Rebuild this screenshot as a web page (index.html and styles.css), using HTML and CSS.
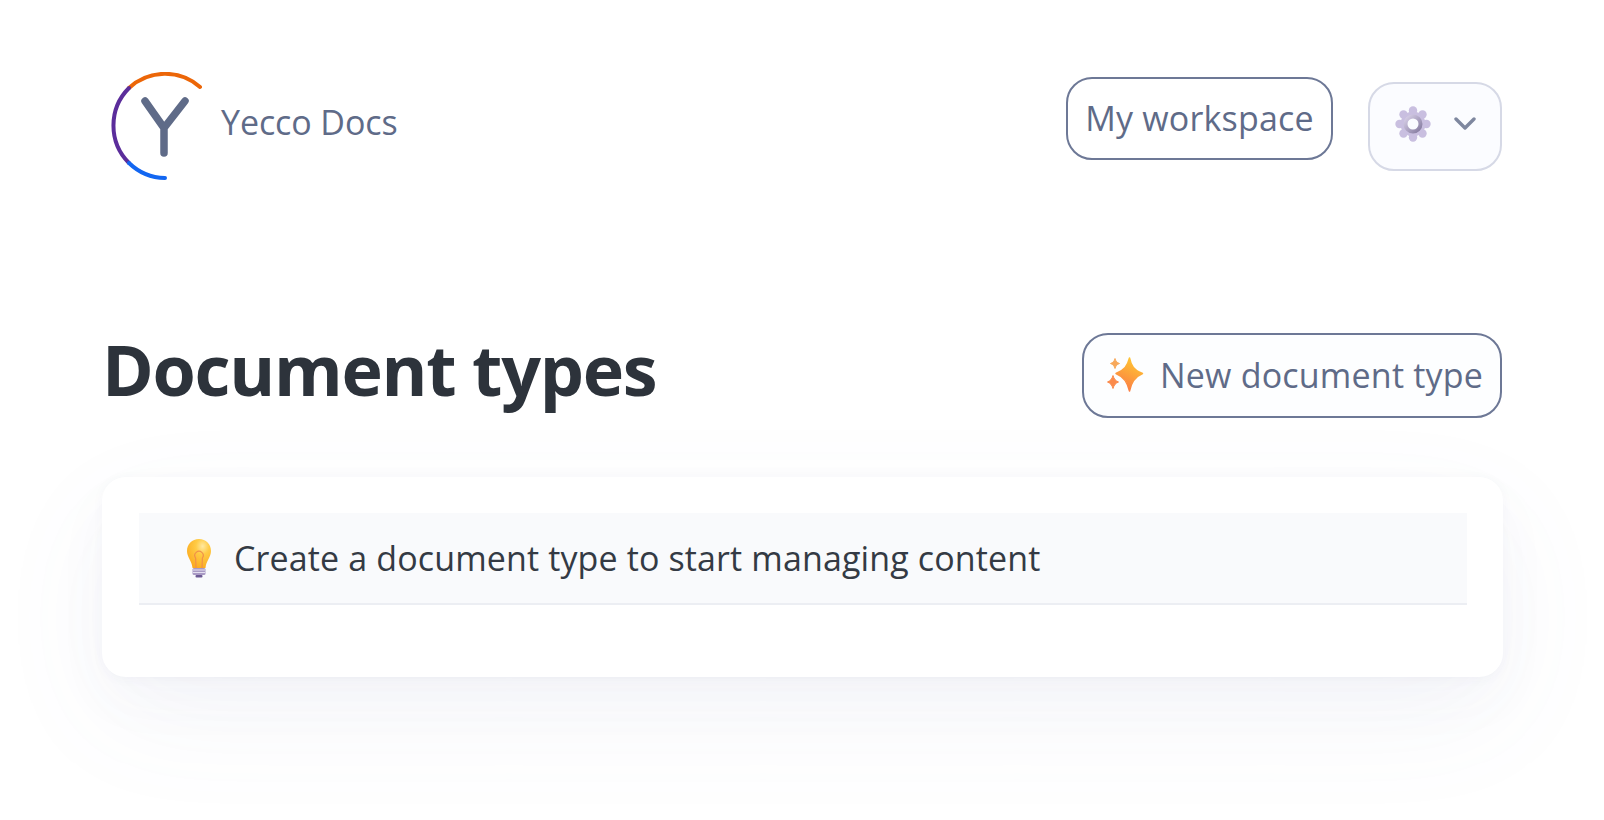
FILE: index.html
```html
<!DOCTYPE html>
<html lang="en">
<head>
  <meta charset="UTF-8">
  <title>Document types - Yecco Docs</title>
  <meta name="viewport" content="width=device-width, initial-scale=1.0">
  <link rel="stylesheet" href="styles.css">
</head>
<body>

  <div class="page">

    <div class="topbar">
      <a href="#" class="brand">
        <svg class="brand-logo" xmlns="http://www.w3.org/2000/svg" viewBox="0 0 110 116" fill="none" stroke-linecap="round">
          <path d="M27 16 A53 53 0 0 1 98 15" stroke="#ec6608" stroke-width="4"/>
          <path d="M27 16 A53 53 0 0 0 27 91" stroke="#5b2d9b" stroke-width="4"/>
          <path d="M27 91 A53 53 0 0 0 63 106" stroke="#1266f1" stroke-width="4"/>
          <path d="M43 29 L62 56 L83 29 M62 56 V81" stroke="#5f6b88" stroke-width="7.5" stroke-linejoin="round"/>
        </svg>
        <span>Yecco Docs</span>
      </a>
      <div class="topbar-actions">
        <a href="#" class="btn btn-workspace">My workspace</a>
        <button class="btn-settings">
          <svg class="icon-gear" xmlns="http://www.w3.org/2000/svg" viewBox="0 0 36 36">
            <defs>
              <linearGradient id="gearRing" x1="0" y1="0" x2="1" y2="1">
                <stop offset="0" stop-color="#d8d0e8"/>
                <stop offset="1" stop-color="#857b9f"/>
              </linearGradient>
            </defs>
            <g fill="#c9bfe0">
              <circle cx="18" cy="4.5" r="4.2"/>
              <circle cx="18" cy="31.5" r="4.2"/>
              <circle cx="4.5" cy="18" r="4.2"/>
              <circle cx="31.5" cy="18" r="4.2"/>
              <circle cx="8.5" cy="8.5" r="4.2"/>
              <circle cx="27.5" cy="8.5" r="4.2"/>
              <circle cx="8.5" cy="27.5" r="4.2"/>
              <circle cx="27.5" cy="27.5" r="4.2"/>
              <circle cx="18" cy="18" r="12.5"/>
            </g>
            <circle cx="18" cy="18" r="7.5" fill="#fafbff" stroke="url(#gearRing)" stroke-width="4"/>
          </svg>
          <svg class="icon-chevron" xmlns="http://www.w3.org/2000/svg" viewBox="0 0 24 14" fill="none">
            <path d="M3 2 L12 11 L21 2" stroke="#7e879f" stroke-width="3.4" stroke-linecap="round" stroke-linejoin="round"/>
          </svg>
        </button>
      </div>
    </div>

    <div class="page-head">
      <h1 class="page-title">Document types</h1>
      <a href="#" class="btn btn-new">
        <svg class="icon-sparkles" xmlns="http://www.w3.org/2000/svg" viewBox="0 0 40 40">
          <defs>
            <linearGradient id="spark" x1="0.7" y1="0" x2="0.3" y2="1">
              <stop offset="0" stop-color="#ffc832"/>
              <stop offset="1" stop-color="#fb7a45"/>
            </linearGradient>
          </defs>
          <path fill="url(#spark)" stroke="url(#spark)" stroke-width="1.5" stroke-linejoin="round" d="M23.5 3 C25 11 28 15 36.5 18.5 C28 22 25 28 23.5 36 C21.5 28 18.5 22 10 18.5 C18.5 15 21.5 11 23.5 3 Z"/>
          <path fill="#f7a95c" stroke="#f7a95c" stroke-width="1" stroke-linejoin="round" d="M9 3.5 C9.8 6.4 11 7.6 13.5 8.5 C11 9.4 9.8 10.8 9 13.5 C8.2 10.8 7 9.4 4.5 8.5 C7 7.6 8.2 6.4 9 3.5 Z"/>
          <path fill="#fb8b4c" stroke="#fb8b4c" stroke-width="1" stroke-linejoin="round" d="M7 20.5 C8 24 9.4 25.6 12.5 27 C9.4 28.4 8 30 7 33.5 C6 30 4.6 28.4 1.5 27 C4.6 25.6 6 24 7 20.5 Z"/>
        </svg>
        <span>New document type</span>
      </a>
    </div>

    <div class="card">
      <div class="notice">
        <svg class="icon-bulb" xmlns="http://www.w3.org/2000/svg" viewBox="0 0 26 40">
          <defs>
            <radialGradient id="bulb" cx="0.65" cy="0.25" r="0.8">
              <stop offset="0" stop-color="#ffe9a0"/>
              <stop offset="0.35" stop-color="#ffcb45"/>
              <stop offset="1" stop-color="#fba91f"/>
            </radialGradient>
          </defs>
          <path fill="url(#bulb)" d="M13 1 C20 1 25 6 25 13 C25 19 20 23 19.5 30 H6.5 C6 23 1 19 1 13 C1 6 6 1 13 1 Z"/>
          <path fill="none" stroke="#f0904a" stroke-width="1.2" d="M10 30 L9.6 20 A4.2 4.2 0 1 1 16.4 20 L16 30"/>
          <rect x="6.5" y="30" width="13" height="7" rx="1.5" fill="#a99ac4"/>
          <path stroke="#e4dff0" stroke-width="1" d="M7 32 H19 M7 34.5 H19"/>
          <rect x="9.5" y="37" width="7" height="2.5" rx="1" fill="#6d5a94"/>
        </svg>
        <span>Create a document type to start managing content</span>
      </div>
    </div>

  </div>

</body>
</html>
```

FILE: styles.css
```css
html, body {
  height: 100%;
}

body {
  margin: 0;
  font-family: "Open Sans", "Noto Sans", Arial, sans-serif;
  background-color: #fff;
  overflow: hidden;
}

.page {
  padding: 77px 102px 0 102px;
}

.topbar {
  display: flex;
  justify-content: space-between;
  align-items: flex-start;
}

.brand {
  display: flex;
  align-items: center;
  gap: 9px;
  color: #5f6b88;
  font-size: 34px;
  text-decoration: none;
  letter-spacing: -0.1px;
}

.brand-logo {
  width: 110px;
  height: 116px;
  margin-top: -5px;
}

.brand span {
  margin-top: -22px;
}

.topbar-actions {
  display: flex;
  align-items: flex-start;
  gap: 35px;
}

.btn {
  display: flex;
  align-items: center;
  box-sizing: border-box;
  border: 2px solid #6d7896;
  border-radius: 26px;
  background: #fff;
  color: #5f6b88;
  font-size: 34px;
  letter-spacing: 0.2px;
  text-decoration: none;
  padding-bottom: 2px;
}

.btn-workspace {
  width: 267px;
  height: 83px;
  justify-content: center;
}

.btn-settings {
  display: flex;
  align-items: center;
  justify-content: space-between;
  box-sizing: border-box;
  width: 134px;
  height: 89px;
  padding: 0 23px 5px 25px;
  margin-top: 5px;
  border: 2px solid #d6d9e6;
  border-radius: 26px;
  background: #fbfcff;
}

.icon-gear {
  width: 36px;
  height: 36px;
}

.icon-chevron {
  width: 24px;
  height: 14px;
}

.page-head {
  display: flex;
  justify-content: space-between;
  align-items: flex-start;
  margin-top: 145px;
}

.page-title {
  margin: 0;
  color: #2d333b;
  font-size: 70px;
  font-weight: 700;
  line-height: 72px;
  letter-spacing: -1.3px;
}

.btn-new {
  width: 420px;
  height: 85px;
  padding-left: 22px;
  gap: 14px;
  background: #fdfeff;
}

.icon-sparkles {
  width: 40px;
  height: 40px;
  flex-shrink: 0;
}

.card {
  box-sizing: border-box;
  height: 200px;
  margin-top: 59px;
  margin-right: -1px;
  padding: 36px 36px 36px 37px;
  background: #fff;
  border-radius: 24px;
  box-shadow: 0 2px 12px rgba(70, 70, 120, 0.04), 0 24px 60px rgba(90, 100, 160, 0.03), 0 40px 120px rgba(100, 120, 170, 0.06);
}

.notice {
  display: flex;
  align-items: center;
  gap: 22px;
  box-sizing: border-box;
  height: 92px;
  padding-left: 47px;
  background: #f9fafc;
  border-bottom: 2px solid #eceef3;
  color: #343a44;
  font-size: 34px;
  letter-spacing: 0.13px;
}

.icon-bulb {
  width: 26px;
  height: 40px;
}
```
